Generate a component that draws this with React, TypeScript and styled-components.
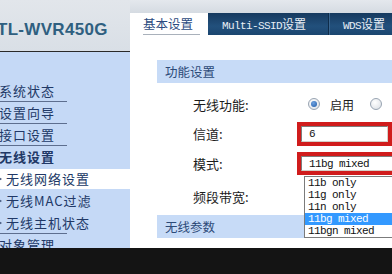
import React from "react";
import styled, { createGlobalStyle, css } from "styled-components";

const GlobalStyle = createGlobalStyle`
  html, body {
    margin: 0;
    padding: 0;
    background: #141414;
  }
  body {
    font-family: "Noto Sans CJK SC", "Liberation Sans", sans-serif;
  }
`;

const Page = styled.div`
  width: 392px;
  height: 274px;
  overflow: hidden;
  display: flex;
  flex-direction: column;
  background: #fff;
`;
const Body = styled.div`
  display: flex;
  height: 248px;
  flex-shrink: 0;
  overflow: hidden;
`;
const Footer = styled.div`
  height: 26px;
  flex-shrink: 0;
  background: #141414;
`;

// left column
const Sidebar = styled.aside`
  width: 130px;
  flex-shrink: 0;
  display: flex;
  flex-direction: column;
`;
const Brand = styled.div`
  height: 52px;
  flex-shrink: 0;
  box-sizing: border-box;
  padding-top: 21px;
  background: linear-gradient(#e2e6eb, #d9dfe6);
  border-bottom: 1px solid #2a2a2a;
`;
const Logo = styled.div`
  margin-left: -3px;
  font-family: "Liberation Sans", sans-serif;
  font-weight: bold;
  font-size: 17px;
  line-height: 17px;
  letter-spacing: 0.3px;
  color: #2f5f80;
`;
const Menu = styled.nav`
  flex: 1 0 auto;
  background: #c5d9f6;
  padding-top: 28px;
  display: flex;
  flex-direction: column;
`;
const MenuItem = styled.div<{
  $sub?: boolean;
  $active?: boolean;
  $bold?: boolean;
  $divider?: boolean;
}>`
  position: relative;
  flex-shrink: 0;
  height: 22px;
  box-sizing: border-box;
  line-height: 22px;
  font-size: 13px;
  letter-spacing: 1px;
  color: #213866;
  white-space: nowrap;
  margin-left: -1px;
  padding-left: ${(p) => (p.$sub ? 7 : 0)}px;
  font-weight: ${(p) => (p.$bold ? "bold" : "normal")};
  ${(p) =>
    p.$divider &&
    css`
      width: 68px;
      border-bottom: 1px solid #5d6e8e;
    `}
  ${(p) =>
    p.$active &&
    css`
      background: #fff;
      margin-top: 1px;
      margin-bottom: 1px;
      height: 20px;
      line-height: 20px;
    `}
  ${(p) =>
    p.$sub &&
    css`
      &::before {
        content: "";
        position: absolute;
        left: 0;
        top: 50%;
        margin-top: -2px;
        border-left: 3px solid #41557a;
        border-top: 2px solid transparent;
        border-bottom: 2px solid transparent;
      }
    `}
`;

// right column
const Main = styled.main`
  flex: 1;
  min-width: 0;
  display: flex;
  flex-direction: column;
  background: #fff;
`;
const TopStrip = styled.div`
  height: 13px;
  flex-shrink: 0;
  background: linear-gradient(#e4e8ed, #d5dbe2);
`;
const TabBar = styled.div`
  height: 22px;
  flex-shrink: 0;
  display: flex;
  padding-left: 13px;
`;
const ActiveTab = styled.div`
  height: 21px;
  margin-right: 8px;
  padding-right: 7px;
  border-bottom: 1px solid #a9b1bb;
  line-height: 22px;
  font-size: 12.5px;
  color: #2b4a80;
  white-space: nowrap;
`;
const DarkTabs = styled.div`
  flex: 1;
  display: flex;
  background: linear-gradient(#163a5f, #22507c 60%, #1b4670);
`;
const Tab = styled.div`
  padding: 0 22px 0 14px;
  border-right: 1px solid #0e2c4a;
  box-shadow: 1px 0 0 #3a6690;
  line-height: 22px;
  font-size: 12px;
  color: #e9eef5;
  white-space: nowrap;
`;
const Latin = styled.span`
  font-family: "Liberation Mono", monospace;
  font-size: 11px;
  letter-spacing: -0.6px;
`;

const Content = styled.div`
  padding: 25px 0 0 27px;
`;
const SectionBar = styled.div<{ $gap?: number }>`
  height: 23px;
  margin-top: ${(p) => p.$gap ?? 0}px;
  padding-left: 8px;
  background: #c7dbf7;
  line-height: 23px;
  font-size: 12.5px;
  color: #2c4a78;
  white-space: nowrap;
`;
const Form = styled.div`
  padding-top: 6px;
  display: flex;
  flex-direction: column;
`;
const FormRow = styled.div<{ $h: number }>`
  height: ${(p) => p.$h}px;
  flex-shrink: 0;
  display: flex;
  align-items: center;
  padding-left: 36px;
`;
const Label = styled.div`
  width: 104px;
  flex-shrink: 0;
  font-size: 13px;
  color: #1c1c1c;
  white-space: nowrap;
`;
const RadioGroup = styled.div`
  display: flex;
  align-items: center;
  margin-left: 11px;
  font-size: 12px;
  color: #1c1c1c;
  white-space: nowrap;
`;
const Radio = styled.span<{ $checked?: boolean }>`
  position: relative;
  width: 12px;
  height: 12px;
  box-sizing: border-box;
  border-radius: 50%;
  border: 1px solid #98a4b2;
  background: radial-gradient(circle at 40% 35%, #ffffff, #d8dde3);
  margin-right: 10px;
  ${(p) =>
    p.$checked &&
    css`
      &::after {
        content: "";
        position: absolute;
        left: 2px;
        top: 2px;
        width: 6px;
        height: 6px;
        border-radius: 50%;
        background: radial-gradient(circle at 40% 35%, #6ea2e0, #1f5aa8);
      }
    `}
`;
const RadioText = styled.span`
  margin-right: 16px;
`;
const Highlight = styled.div<{ $h: number }>`
  width: 140px;
  height: ${(p) => p.$h}px;
  box-sizing: border-box;
  border: 4px solid #d01c1c;
  display: flex;
`;
const Field = styled.div`
  flex: 1;
  box-sizing: border-box;
  border: 1px solid;
  border-color: #7d7d7d #d4d0c8 #d4d0c8 #7d7d7d;
  background: #fff;
  padding-left: 7px;
  display: flex;
  align-items: center;
  font-family: "Liberation Mono", monospace;
  font-size: 11px;
  letter-spacing: -0.6px;
  color: #111;
  white-space: nowrap;
`;
const SelectWrap = styled.div`
  position: relative;
`;
const Dropdown = styled.div`
  position: absolute;
  top: calc(100% + 1px);
  left: 7px;
  width: 130px;
  border: 1px solid #7b7b7b;
  background: #fff;
  z-index: 2;
`;
const Option = styled.div<{ $selected?: boolean }>`
  height: 12px;
  line-height: 12px;
  padding-left: 3px;
  font-family: "Liberation Mono", monospace;
  font-size: 11px;
  letter-spacing: -0.6px;
  white-space: nowrap;
  color: ${(p) => (p.$selected ? "#fff" : "#111")};
  background: ${(p) => (p.$selected ? "#3399ff" : "transparent")};
`;

const modes = ["11b only", "11g only", "11n only", "11bg mixed", "11bgn mixed"];

export default function App() {
  return (
    <Page>
      <GlobalStyle />
      <Body>
        <Sidebar>
          <Brand>
            <Logo>TL-WVR450G</Logo>
          </Brand>
          <Menu>
            <MenuItem $divider>系统状态</MenuItem>
            <MenuItem $divider>设置向导</MenuItem>
            <MenuItem $divider>接口设置</MenuItem>
            <MenuItem $bold>无线设置</MenuItem>
            <MenuItem $sub $active>无线网络设置</MenuItem>
            <MenuItem $sub>无线MAC过滤</MenuItem>
            <MenuItem $sub $divider>无线主机状态</MenuItem>
            <MenuItem>对象管理</MenuItem>
          </Menu>
        </Sidebar>
        <Main>
          <TopStrip />
          <TabBar>
            <ActiveTab>基本设置</ActiveTab>
            <DarkTabs>
              <Tab>
                <Latin>Multi-SSID</Latin>设置
              </Tab>
              <Tab>
                <Latin>WDS</Latin>设置
              </Tab>
            </DarkTabs>
          </TabBar>
          <Content>
            <SectionBar>功能设置</SectionBar>
            <Form>
              <FormRow $h={30}>
                <Label>无线功能:</Label>
                <RadioGroup>
                  <Radio $checked />
                  <RadioText>启用</RadioText>
                  <Radio />
                  <RadioText>禁用</RadioText>
                </RadioGroup>
              </FormRow>
              <FormRow $h={29}>
                <Label>信道:</Label>
                <Highlight $h={24}>
                  <Field>6</Field>
                </Highlight>
              </FormRow>
              <FormRow $h={31}>
                <Label>模式:</Label>
                <SelectWrap>
                  <Highlight $h={23}>
                    <Field>11bg mixed</Field>
                  </Highlight>
                  <Dropdown>
                    {modes.map((m) => (
                      <Option key={m} $selected={m === "11bg mixed"}>
                        {m}
                      </Option>
                    ))}
                  </Dropdown>
                </SelectWrap>
              </FormRow>
              <FormRow $h={34}>
                <Label>频段带宽:</Label>
              </FormRow>
            </Form>
            <SectionBar $gap={2}>无线参数</SectionBar>
          </Content>
        </Main>
      </Body>
      <Footer />
    </Page>
  );
}
